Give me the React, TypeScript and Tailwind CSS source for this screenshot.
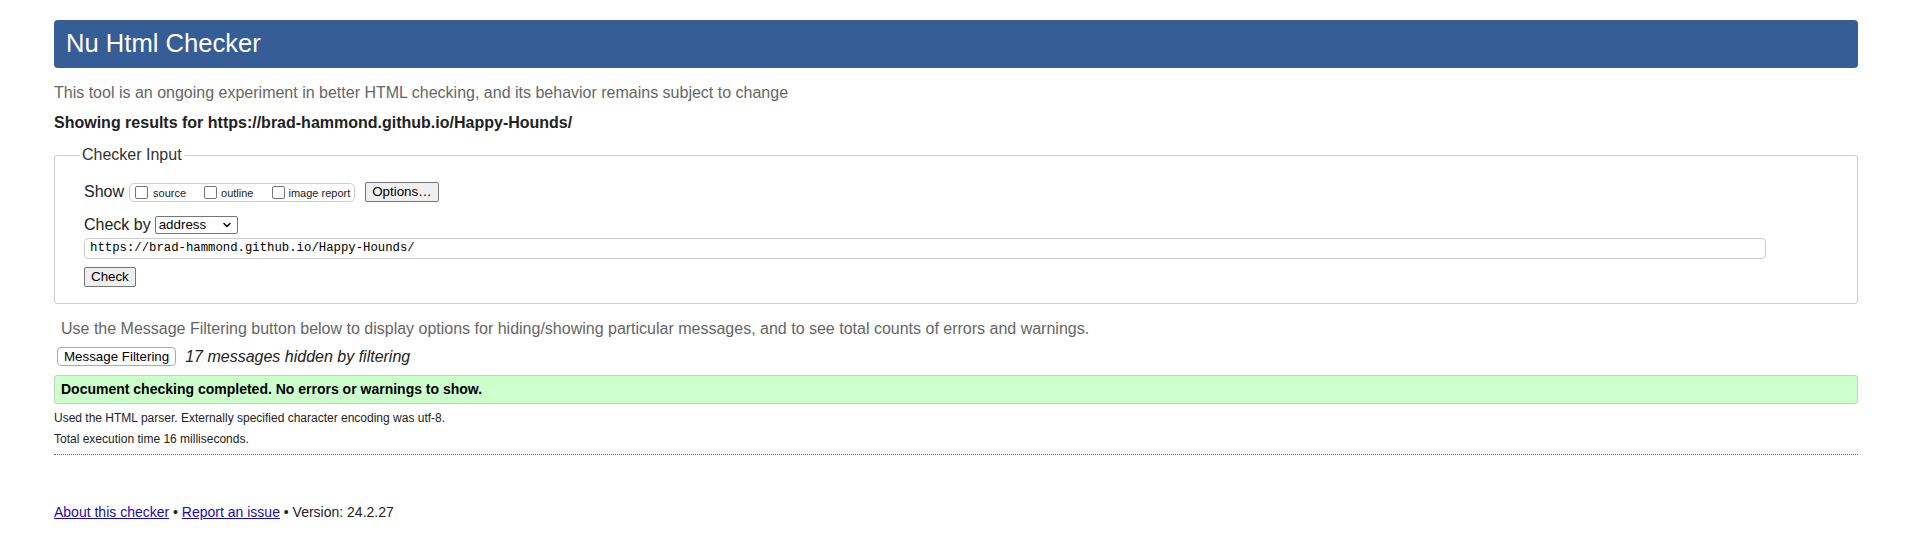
import { ChevronDown } from "lucide-react";

const Checkbox = () => (
  <span className="inline-block w-[13px] h-[13px] border border-[#767676] rounded-[2px] bg-white shrink-0" />
);

const Btn = ({ label, cls = "" }: { label: string; cls?: string }) => (
  <button
    className={`h-[20px] px-[6px] border border-[#767676] rounded-[2px] bg-[#efefef] text-[13.33px] leading-[18px] text-black ${cls}`}
  >
    {label}
  </button>
);

const App = () => {
  return (
    <div className="min-h-[544px] bg-white font-['Liberation_Sans',Arial,sans-serif] text-[#222]">
      <div className="pl-[54px] pr-[57px] pt-[20px]">
        <h1 className="h-[48px] flex items-center pl-[12px] bg-[#365d95] rounded-[4px] text-white text-[25.6px] leading-none">
          Nu Html Checker
        </h1>

        <p className="mt-[16px] text-[16px] leading-[18px] text-[#666]">
          This tool is an ongoing experiment in better HTML checking, and its behavior remains subject to change
        </p>
        <p className="mt-[12px] text-[16px] leading-[18px] font-bold">
          Showing results for https://brad-hammond.github.io/Happy-Hounds/
        </p>

        <fieldset className="mt-[14px] border border-[#ccc] rounded-[3px] pl-[29px] pr-[29px] pb-[16px]">
          <legend className="ml-[-4px] px-[2px] text-[16px] leading-[18px] text-[#333]">Checker Input</legend>

          <div className="mt-[16px] h-[24px] flex items-center">
            <span className="text-[16px] leading-[18px]">Show</span>
            <div className="ml-[5px] h-[19px] flex items-center border border-[#ccc] rounded-[5px] pl-[5px] pr-[4px] text-[11px] leading-[13px]">
              <Checkbox />
              <span className="ml-[5px] mt-[3px]">source</span>
              <span className="ml-[18px] flex"><Checkbox /></span>
              <span className="ml-[4px] mt-[3px]">outline</span>
              <span className="ml-[19px] flex"><Checkbox /></span>
              <span className="ml-[3px] mt-[3px]">image report</span>
            </div>
            <Btn label="Options…" cls="ml-[10px]" />
          </div>

          <div className="mt-[10px] h-[22px] flex items-center">
            <span className="text-[16px] leading-[18px]">Check by</span>
            <div className="ml-[4px] w-[83px] h-[18px] flex items-center justify-between border border-[#767676] rounded-[2px] bg-white pl-[3px] pr-[4px] text-[13.33px] text-black">
              <span>address</span>
              <ChevronDown size={12} strokeWidth={3} />
            </div>
          </div>

          <div className="mt-[2px] w-[1682px] h-[21px] flex items-center border border-[#ccc] rounded-[4px] pl-[5px] font-['Liberation_Mono',monospace] text-[12.3px] text-black">
            https://brad-hammond.github.io/Happy-Hounds/
          </div>

          <div className="mt-[8px] flex">
            <Btn label="Check" />
          </div>
        </fieldset>

        <p className="mt-[16px] pl-[7px] text-[16px] leading-[18px] text-[#666]">
          Use the Message Filtering button below to display options for hiding/showing particular messages, and to see total counts of errors and warnings.
        </p>

        <div className="mt-[9px] h-[19px] flex items-center">
          <button className="ml-[3px] h-[19px] px-[6px] border border-[#aaa] rounded-[4px] bg-white text-[13.33px] leading-[17px] text-black">
            Message Filtering
          </button>
          <span className="ml-[9px] text-[16px] italic">17 messages hidden by filtering</span>
        </div>

        <div className="mt-[9px] h-[29px] flex items-center pl-[6px] bg-[#ccffcc] border border-[#b9d6b9] rounded-[3px] text-[14px] font-bold text-black">
          Document checking completed. No errors or warnings to show.
        </div>

        <p className="mt-[7px] text-[12px] leading-[14px]">
          Used the HTML parser. Externally specified character encoding was utf-8.
        </p>
        <p className="mt-[7px] text-[12px] leading-[14px]">Total execution time 16 milliseconds.</p>

        <hr className="mt-[8px] border-0 border-t border-dotted border-[#666]" />

        <p className="mt-[49px] text-[14px] leading-[16px]">
          <a className="text-[#1a0dab] underline" href="#">About this checker</a>
          {" • "}
          <a className="text-[#1a0dab] underline" href="#">Report an issue</a>
          {" • Version: 24.2.27"}
        </p>
      </div>
    </div>
  );
};

export default App;
